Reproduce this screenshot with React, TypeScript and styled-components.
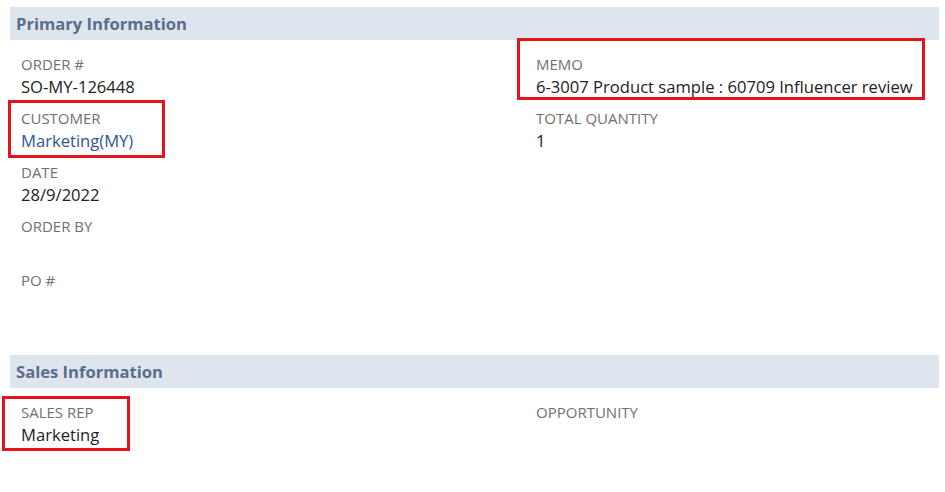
import styled, { createGlobalStyle } from 'styled-components';

const GlobalStyle = createGlobalStyle`
  body {
    margin: 0;
    background: #fff;
    font-family: 'Open Sans', 'Noto Sans', sans-serif;
  }
`;

type Field = {
  label: string;
  value?: string;
  link?: boolean;
  mark?: { top: number; left: number; width: number; height: number };
};

const primaryLeft: Field[] = [
  { label: 'ORDER #', value: 'SO-MY-126448' },
  { label: 'CUSTOMER', value: 'Marketing(MY)', link: true, mark: { top: -8, left: -13, width: 157, height: 58 } },
  { label: 'DATE', value: '28/9/2022' },
  { label: 'ORDER BY' },
  { label: 'PO #' },
];

const primaryRight: Field[] = [
  { label: 'MEMO', value: '6-3007 Product sample : 60709 Influencer review', mark: { top: -16, left: -19, width: 408, height: 62 } },
  { label: 'TOTAL QUANTITY', value: '1' },
];

const salesLeft: Field[] = [
  { label: 'SALES REP', value: 'Marketing', mark: { top: -6, left: -19, width: 128, height: 55 } },
];

const salesRight: Field[] = [{ label: 'OPPORTUNITY' }];

function FieldBlock({ field }: { field: Field }) {
  return (
    <FieldWrap>
      <Label>{field.label}</Label>
      <Value $link={field.link}>{field.value ?? ''}</Value>
      {field.mark && (
        <Highlight
          $top={field.mark.top}
          $left={field.mark.left}
          $width={field.mark.width}
          $height={field.mark.height}
        />
      )}
    </FieldWrap>
  );
}

function Section({ title, left, right, gapAfter }: { title: string; left: Field[]; right: Field[]; gapAfter?: boolean }) {
  return (
    <SectionWrap $gapAfter={gapAfter}>
      <SectionHeader>{title}</SectionHeader>
      <Columns>
        <Column>
          {left.map((f) => <FieldBlock key={f.label} field={f} />)}
        </Column>
        <Column>
          {right.map((f) => <FieldBlock key={f.label} field={f} />)}
        </Column>
      </Columns>
    </SectionWrap>
  );
}

export default function App() {
  return (
    <>
      <GlobalStyle />
      <Page>
        <Section title="Primary Information" left={primaryLeft} right={primaryRight} gapAfter />
        <Section title="Sales Information" left={salesLeft} right={salesRight} />
      </Page>
    </>
  );
}

const Page = styled.div`
  padding: 7px 6px 0 10px;
  width: 945px;
  height: 492px;
  box-sizing: border-box;
  overflow: hidden;
`;

const SectionWrap = styled.div<{ $gapAfter?: boolean }>`
  margin-bottom: ${(p) => (p.$gapAfter ? '31px' : '0')};
`;

const SectionHeader = styled.div`
  height: 33px;
  line-height: 33px;
  background: #dfe5ee;
  color: #5a6d8b;
  font-size: 16.6px;
  font-weight: 700;
  padding-left: 6px;
`;

const Columns = styled.div`
  display: grid;
  grid-template-columns: 515px 1fr;
  padding: 14px 0 0 11px;
`;

const Column = styled.div`
  display: flex;
  flex-direction: column;
`;

const FieldWrap = styled.div`
  position: relative;
  height: 54px;
`;

const Label = styled.div`
  font-size: 15px;
  line-height: 20px;
  color: #707070;
`;

const Value = styled.div<{ $link?: boolean }>`
  margin-top: 2px;
  font-size: 16.6px;
  line-height: 22px;
  color: ${(p) => (p.$link ? '#2f5597' : '#222')};
  min-height: 22px;
`;

const Highlight = styled.div<{ $top: number; $left: number; $width: number; $height: number }>`
  position: absolute;
  top: ${(p) => p.$top}px;
  left: ${(p) => p.$left}px;
  width: ${(p) => p.$width}px;
  height: ${(p) => p.$height}px;
  border: 3px solid #e3141e;
  box-sizing: border-box;
  pointer-events: none;
`;
